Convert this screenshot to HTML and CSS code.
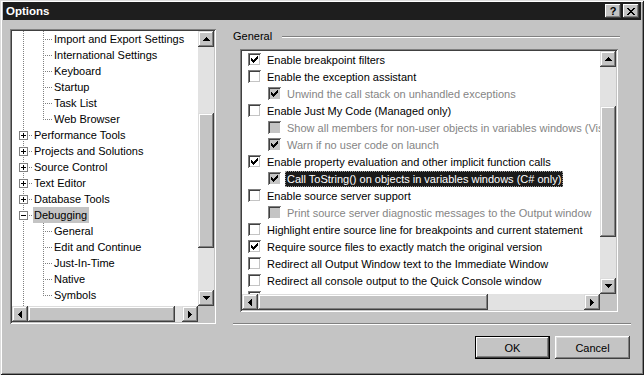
FILE: index.html
```html
<!DOCTYPE html>
<html>
<head>
<meta charset="utf-8">
<title>Options</title>
<link rel="stylesheet" href="styles.css">
</head>
<body>
<div class="dialog">
  <div class="titlebar">
    <span class="title">Options</span>
    <div class="tbtns">
      <span class="tbtn q">?</span>
      <span class="tbtn"><svg width="8" height="7" viewBox="0 0 8 7"><path d="M0 0h2v1H0zM6 0h2v1H6zM1 1h2v1H1zM5 1h2v1H5zM2 2h2v1H2zM4 2h2v1H4zM3 3h2v1H3zM2 4h2v1H2zM4 4h2v1H4zM1 5h2v1H1zM5 5h2v1H5zM0 6h2v1H0zM6 6h2v1H6z"/></svg></span>
    </div>
  </div>

  <div class="main">
    <div class="tree">
      <div class="tree-content">
        <div class="row"><i class="c v"></i><i class="c t"></i><span class="lbl">Import and Export Settings</span></div>
        <div class="row"><i class="c v"></i><i class="c t"></i><span class="lbl">International Settings</span></div>
        <div class="row"><i class="c v"></i><i class="c t"></i><span class="lbl">Keyboard</span></div>
        <div class="row"><i class="c v"></i><i class="c t"></i><span class="lbl">Startup</span></div>
        <div class="row"><i class="c v"></i><i class="c t"></i><span class="lbl">Task List</span></div>
        <div class="row"><i class="c v"></i><i class="c l"></i><span class="lbl">Web Browser</span></div>
        <div class="row"><i class="c bx"><b class="box plus"></b></i><span class="lbl">Performance Tools</span></div>
        <div class="row"><i class="c bx"><b class="box plus"></b></i><span class="lbl">Projects and Solutions</span></div>
        <div class="row"><i class="c bx"><b class="box plus"></b></i><span class="lbl">Source Control</span></div>
        <div class="row"><i class="c bx"><b class="box plus"></b></i><span class="lbl">Text Editor</span></div>
        <div class="row"><i class="c bx"><b class="box plus"></b></i><span class="lbl">Database Tools</span></div>
        <div class="row"><i class="c bx"><b class="box"></b></i><span class="lbl sel">Debugging</span></div>
        <div class="row"><i class="c v"></i><i class="c t"></i><span class="lbl">General</span></div>
        <div class="row"><i class="c v"></i><i class="c t"></i><span class="lbl">Edit and Continue</span></div>
        <div class="row"><i class="c v"></i><i class="c t"></i><span class="lbl">Just-In-Time</span></div>
        <div class="row"><i class="c v"></i><i class="c t"></i><span class="lbl">Native</span></div>
        <div class="row"><i class="c v"></i><i class="c l"></i><span class="lbl">Symbols</span></div>
        <div class="row"><i class="c bx"><b class="box plus"></b></i><span class="lbl">Device Tools</span></div>
      </div>
      <div class="vscroll">
        <span class="sbtn"><svg width="7" height="4" viewBox="0 0 7 4"><path d="M3 0h1v1h1v1h1v1h1v1H0V3h1V2h1V1h1z"/></svg></span>
        <span class="track" style="height:66px"></span>
        <span class="thumb" style="height:135px"></span>
        <span class="track grow"></span>
        <span class="sbtn"><svg width="7" height="4" viewBox="0 0 7 4"><path d="M0 0h7v1H6v1H5v1H4v1H3V3H2V2H1V1H0z"/></svg></span>
      </div>
      <div class="hscroll">
        <span class="sbtn"><svg width="4" height="7" viewBox="0 0 4 7"><path d="M3 0h1v7H3V6H2V5H1V4H0V3h1V2h1V1h1z"/></svg></span>
        <span class="thumb" style="width:147px"></span>
        <span class="track grow"></span>
        <span class="sbtn"><svg width="4" height="7" viewBox="0 0 4 7"><path d="M0 0h1v1h1v1h1v1h1v1H3v1H2v1H1v1H0z"/></svg></span>
      </div>
      <div class="corner"></div>
    </div>

    <div class="right">
      <div class="group-head">
        <span class="group-title">General</span>
        <span class="etch"></span>
      </div>
      <div class="list">
        <div class="list-content">
          <div class="item"><span class="cb"><svg class="ck" width="7" height="7" viewBox="0 0 7 7"><path d="M0 2h1v3H0zM1 3h1v3H1zM2 4h1v3H2zM3 3h1v3H3zM4 2h1v3H4zM5 1h1v3H5zM6 0h1v3H6z"/></svg></span><span class="txt">Enable breakpoint filters</span></div>
          <div class="item"><span class="cb"></span><span class="txt">Enable the exception assistant</span></div>
          <div class="item sub dis"><span class="cb"><svg class="ck" width="7" height="7" viewBox="0 0 7 7"><path d="M0 2h1v3H0zM1 3h1v3H1zM2 4h1v3H2zM3 3h1v3H3zM4 2h1v3H4zM5 1h1v3H5zM6 0h1v3H6z"/></svg></span><span class="txt">Unwind the call stack on unhandled exceptions</span></div>
          <div class="item"><span class="cb"></span><span class="txt">Enable Just My Code (Managed only)</span></div>
          <div class="item sub dis"><span class="cb"></span><span class="txt">Show all members for non-user objects in variables windows (Visual Basic only)</span></div>
          <div class="item sub dis"><span class="cb"><svg class="ck" width="7" height="7" viewBox="0 0 7 7"><path d="M0 2h1v3H0zM1 3h1v3H1zM2 4h1v3H2zM3 3h1v3H3zM4 2h1v3H4zM5 1h1v3H5zM6 0h1v3H6z"/></svg></span><span class="txt">Warn if no user code on launch</span></div>
          <div class="item"><span class="cb"><svg class="ck" width="7" height="7" viewBox="0 0 7 7"><path d="M0 2h1v3H0zM1 3h1v3H1zM2 4h1v3H2zM3 3h1v3H3zM4 2h1v3H4zM5 1h1v3H5zM6 0h1v3H6z"/></svg></span><span class="txt">Enable property evaluation and other implicit function calls</span></div>
          <div class="item sub gray"><span class="cb"><svg class="ck" width="7" height="7" viewBox="0 0 7 7"><path d="M0 2h1v3H0zM1 3h1v3H1zM2 4h1v3H2zM3 3h1v3H3zM4 2h1v3H4zM5 1h1v3H5zM6 0h1v3H6z"/></svg></span><span class="txt hl">Call ToString() on objects in variables windows (C# only)</span></div>
          <div class="item"><span class="cb"></span><span class="txt">Enable source server support</span></div>
          <div class="item sub dis"><span class="cb"></span><span class="txt">Print source server diagnostic messages to the Output window</span></div>
          <div class="item"><span class="cb"></span><span class="txt">Highlight entire source line for breakpoints and current statement</span></div>
          <div class="item"><span class="cb"><svg class="ck" width="7" height="7" viewBox="0 0 7 7"><path d="M0 2h1v3H0zM1 3h1v3H1zM2 4h1v3H2zM3 3h1v3H3zM4 2h1v3H4zM5 1h1v3H5zM6 0h1v3H6z"/></svg></span><span class="txt">Require source files to exactly match the original version</span></div>
          <div class="item"><span class="cb"></span><span class="txt">Redirect all Output Window text to the Immediate Window</span></div>
          <div class="item"><span class="cb"></span><span class="txt">Redirect all console output to the Quick Console window</span></div>
          <div class="item"><span class="cb"></span><span class="txt">Show raw structure of objects in variables windows</span></div>
        </div>
        <div class="vscroll">
          <span class="sbtn"><svg width="7" height="4" viewBox="0 0 7 4"><path d="M3 0h1v1h1v1h1v1h1v1H0V3h1V2h1V1h1z"/></svg></span>
          <span class="track" style="height:39px"></span>
          <span class="thumb" style="height:131px"></span>
          <span class="track grow"></span>
          <span class="sbtn"><svg width="7" height="4" viewBox="0 0 7 4"><path d="M0 0h7v1H6v1H5v1H4v1H3V3H2V2H1V1H0z"/></svg></span>
        </div>
        <div class="hscroll">
          <span class="sbtn"><svg width="4" height="7" viewBox="0 0 4 7"><path d="M3 0h1v7H3V6H2V5H1V4H0V3h1V2h1V1h1z"/></svg></span>
          <span class="thumb" style="width:230px"></span>
          <span class="track grow"></span>
          <span class="sbtn"><svg width="4" height="7" viewBox="0 0 4 7"><path d="M0 0h1v1h1v1h1v1h1v1H3v1H2v1H1v1H0z"/></svg></span>
        </div>
        <div class="corner"></div>
      </div>
      <div class="sep"></div>
      <div class="buttons">
        <span class="button default">OK</span>
        <span class="button">Cancel</span>
      </div>
    </div>
  </div>
</div>
</body>
</html>
```

FILE: styles.css
```css
* { box-sizing: border-box; }
html, body { margin: 0; padding: 0; }
body {
  width: 644px;
  height: 375px;
  overflow: hidden;
  background: #c4c4c4;
  font-family: "Liberation Sans", Arial, sans-serif;
  font-size: 11px;
  color: #000;
}
svg { display: block; fill: #000; shape-rendering: crispEdges; }

.dialog {
  width: 644px;
  height: 375px;
  padding: 2px 3px 3px;
  background: #c4c4c4;
  box-shadow: inset 1px 1px #dcdcdc, inset -1px -1px #1e1e1e, inset 2px 2px #fff, inset -2px -2px #808080;
  display: flex;
  flex-direction: column;
}

.titlebar {
  height: 18px;
  flex: none;
  background: #1e1e1e;
  color: #fff;
  display: flex;
  align-items: center;
  padding: 0 2px;
}
.title { flex: 1; font-weight: bold; font-size: 11.5px; padding-left: 1px; }
.tbtns { display: flex; gap: 2px; }
.tbtn {
  width: 16px;
  height: 14px;
  background: #c4c4c4;
  box-shadow: inset -1px -1px #404040, inset 1px 1px #fff, inset -2px -2px #808080;
  display: flex;
  align-items: center;
  justify-content: center;
  color: #000;
}
.tbtn.q { font-weight: bold; font-size: 11px; line-height: 14px; padding-bottom: 1px; }

.main { display: flex; padding: 9px 0 0 7px; }

/* sunken box */
.tree, .list {
  background: #fff;
  padding: 2px;
  box-shadow: inset 1px 1px #808080, inset -1px -1px #fff, inset 2px 2px #404040, inset -2px -2px #c4c4c4;
  display: grid;
}
.tree {
  width: 206px;
  height: 295px;
  grid-template-columns: 186px 16px;
  grid-template-rows: 275px 16px;
}
.tree-content { overflow: hidden; padding-left: 1px; }
.row { display: flex; height: 16px; line-height: 16px; white-space: nowrap; }
.c { display: block; flex: none; width: 20px; height: 16px; }
.v {
  background: repeating-linear-gradient(to bottom, #808080 0 1px, transparent 1px 2px) 10px 0 / 1px 100% no-repeat;
}
.t {
  background:
    repeating-linear-gradient(to bottom, #808080 0 1px, transparent 1px 2px) 10px 0 / 1px 100% no-repeat,
    repeating-linear-gradient(to right, #808080 0 1px, transparent 1px 2px) 10px 8px / 10px 1px no-repeat;
}
.l {
  background:
    repeating-linear-gradient(to bottom, #808080 0 1px, transparent 1px 2px) 10px 0 / 1px 9px no-repeat,
    repeating-linear-gradient(to right, #808080 0 1px, transparent 1px 2px) 10px 8px / 10px 1px no-repeat;
}
.bx {
  padding: 4px 0 0 6px;
  background:
    repeating-linear-gradient(to bottom, #808080 0 1px, transparent 1px 2px) 10px 0 / 1px 100% no-repeat,
    repeating-linear-gradient(to right, #808080 0 1px, transparent 1px 2px) 16px 8px / 4px 1px no-repeat;
}
.box {
  display: block;
  width: 9px;
  height: 9px;
  border: 1px solid #808080;
  background: linear-gradient(#000, #000) center / 5px 1px no-repeat, #fff;
}
.box.plus {
  background:
    linear-gradient(#000, #000) center / 5px 1px no-repeat,
    linear-gradient(#000, #000) center / 1px 5px no-repeat,
    #fff;
}
.lbl { padding: 0 2px 0 1px; }
.lbl.sel { background: #c4c4c4; }

/* scrollbars */
.vscroll { display: flex; flex-direction: column; width: 16px; }
.hscroll { display: flex; height: 16px; }
.sbtn, .thumb {
  flex: none;
  background: #c4c4c4;
  box-shadow: inset -1px -1px #404040, inset 1px 1px #dcdcdc, inset -2px -2px #808080, inset 2px 2px #fff;
}
.sbtn { width: 16px; height: 16px; display: flex; align-items: center; justify-content: center; }
.vscroll .thumb { width: 16px; }
.hscroll .thumb { height: 16px; }
.track { flex: none; background: #e2e2e2; }
.track.grow { flex: 1; }
.corner { background: #c4c4c4; }

/* right side */
.right { width: 398px; margin-left: 17px; display: flex; flex-direction: column; }
.group-head { display: flex; height: 14px; line-height: 14px; }
.etch {
  flex: 1;
  height: 2px;
  margin: 7px 11px 0 10px;
  border-top: 1px solid #808080;
  border-bottom: 1px solid #fff;
}
.list {
  width: 378px;
  height: 263px;
  margin: 6px 0 0 7px;
  grid-template-columns: 358px 16px;
  grid-template-rows: 243px 16px;
}
.list-content { overflow: hidden; }
.item {
  display: flex;
  align-items: center;
  height: 17px;
  padding-left: 6px;
  white-space: nowrap;
}
.item.sub { padding-left: 26px; }
.cb {
  flex: none;
  width: 13px;
  height: 13px;
  margin-right: 6px;
  background: #fff;
  box-shadow: inset 1px 1px #808080, inset -1px -1px #fff, inset 2px 2px #404040, inset -2px -2px #c4c4c4;
  display: flex;
  align-items: center;
  justify-content: center;
}
.item.dis .cb, .item.gray .cb { background: #c4c4c4; }
.item.dis .txt { color: #858585; }
.txt { line-height: 16px; }
.txt.hl {
  margin-left: -2px;
  padding: 0 2px;
  background: #1a1a1a;
  color: #fff;
  outline: 1px dotted #a0a0a0;
  outline-offset: -1px;
}

.sep {
  height: 2px;
  margin-top: 11px;
  border-top: 1px solid #808080;
  border-bottom: 1px solid #fff;
}
.buttons {
  display: flex;
  justify-content: flex-end;
  gap: 5px;
  margin-top: 11px;
  padding-right: 1px;
}
.button {
  width: 75px;
  height: 23px;
  display: flex;
  align-items: center;
  justify-content: center;
  background: #c4c4c4;
  box-shadow: inset -1px -1px #404040, inset 1px 1px #fff, inset -2px -2px #808080, inset 2px 2px #dcdcdc;
}
.button.default {
  box-shadow: inset 0 0 0 1px #000, inset -2px -2px #404040, inset 2px 2px #fff, inset -3px -3px #808080;
}
```
